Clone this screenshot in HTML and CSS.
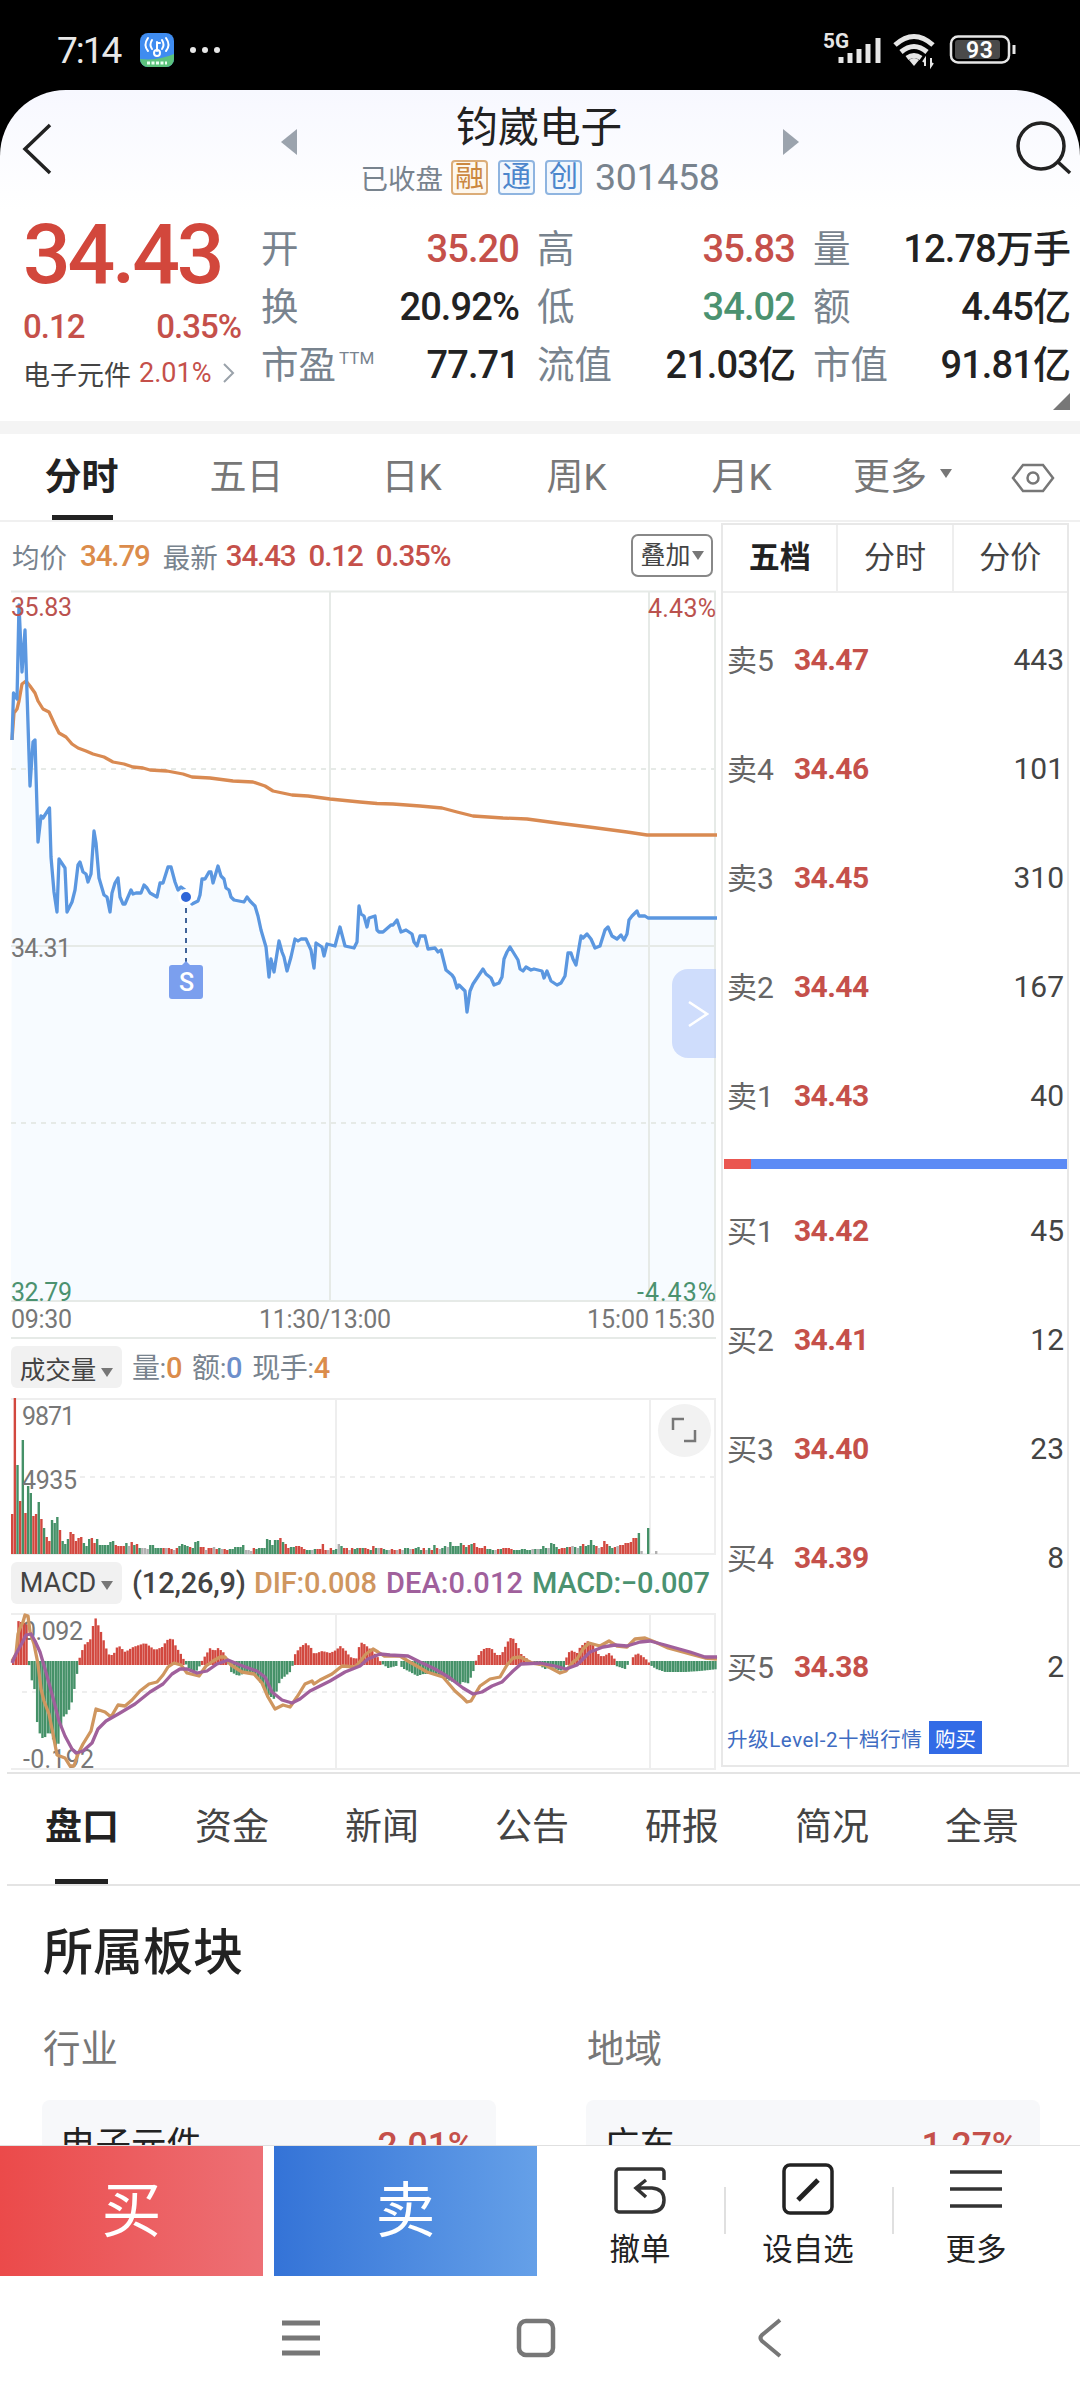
FILE: index.html
```html
<!DOCTYPE html>
<html lang="zh-CN">
<head>
  <meta charset="UTF-8" />
  <meta name="viewport" content="width=device-width, initial-scale=1.0" />
  <title>钧崴电子 301458</title>
  <link rel="stylesheet" href="styles.css">
</head>
<body>
  <div class="status-bar">
    <span class="time">7:14</span>
    <svg class="app-icon" width="34" height="34" viewBox="0 0 34 34">
      <defs><clipPath id="appClip"><rect width="34" height="34" rx="8" /></clipPath></defs>
      <g clip-path="url(#appClip)">
        <rect width="34" height="34" fill="#3f8cf0" />
        <path d="M0 26Q18 28 34 21V34H0z" fill="#5cc27c" />
        <g fill="none" stroke="#fff" stroke-width="2" stroke-linecap="round">
          <path d="M17 9v9M17 10h3M12 7q-3 5 0 9M22 7q3 5 0 9M8 5q-5 7 0 13M26 5q5 7 0 13" />
          <circle cx="17" cy="20" r="3" />
        </g>
        <path d="M7 30h20" stroke="#e8fff0" stroke-width="3" stroke-dasharray="3 1.5" />
      </g>
    </svg>
    <svg width="34" height="34" viewBox="0 0 34 34" fill="#e8e8e8">
      <circle cx="5" cy="17" r="3" /><circle cx="17" cy="17" r="3" /><circle cx="29" cy="17" r="3" />
    </svg>
    <svg class="signals" width="200" height="40" viewBox="820 30 200 40">
      <text x="823" y="48" font-size="21" font-weight="700" textLength="26" lengthAdjust="spacingAndGlyphs" fill="#e6e6e6">5G</text>
      <path d="M841 57v6M850 53v10M859 49v14M868 44v19M878 38v25" stroke="#e6e6e6" stroke-width="5" />
      <g fill="none" stroke="#e6e6e6" stroke-width="5">
        <path d="M895 45Q914 28 933 45" />
        <path d="M901 52Q914 41 927 52" />
        <path d="M907 58Q914 53 921 58" />
      </g>
      <path d="M909 60q5-4 10 0l-5 6z" fill="#e6e6e6" />
      <path d="M925 66v-7l-2 3M931 58v8l2-3" stroke="#e6e6e6" stroke-width="2" fill="none" />
      <rect x="951" y="36.500" width="58" height="26" rx="7" fill="none" stroke="#e6e6e6" stroke-width="2.500" />
      <rect x="955" y="40" width="45" height="19" rx="3" fill="#4a4a4a" />
      <path d="M1014 45v9" stroke="#e6e6e6" stroke-width="3" />
      <text x="966" y="58" font-size="23" font-weight="600" textLength="27" fill="#fff">93</text>
    </svg>
  </div>

  <div class="page">
    <header class="top">
      <svg width="60" height="100" viewBox="0 0 60 100"><path d="M50 35L25 59L50 83" fill="none" stroke="#222" stroke-width="3.500" /></svg>
      <div class="tri-left"></div>
      <div class="stock">
        <h1>钧崴电子</h1>
        <div class="sub">
          <span class="state">已收盘</span>
          <i class="tag orange">融</i><i class="tag">通</i><i class="tag">创</i>
          <span class="code">301458</span>
        </div>
      </div>
      <div class="tri-right"></div>
      <svg class="search" width="70" height="100" viewBox="1010 90 70 100"><circle cx="1041" cy="146" r="23" fill="none" stroke="#222" stroke-width="3.500" /><path d="M1058 162L1070 173" stroke="#222" stroke-width="3.500" /></svg>
    </header>

    <section class="quote">
      <div class="price-box">
        <div class="price">34.43</div>
        <div class="change"><span>0.12</span><span>0.35%</span></div>
        <div class="sector">电子元件 <b>2.01%</b>
          <svg width="14" height="22" viewBox="0 0 14 22"><path d="M2 2L11 11L2 20" fill="none" stroke="#9aa2aa" stroke-width="2" /></svg>
        </div>
      </div>
      <div class="stats">
        <div class="stat"><label>开</label><span class="red">35.20</span></div>
        <div class="stat"><label>高</label><span class="red">35.83</span></div>
        <div class="stat"><label>量</label><span>12.78万手</span></div>
        <div class="stat"><label>换</label><span>20.92%</span></div>
        <div class="stat"><label>低</label><span class="green">34.02</span></div>
        <div class="stat"><label>额</label><span>4.45亿</span></div>
        <div class="stat"><label>市盈<sup>TTM</sup></label><span>77.71</span></div>
        <div class="stat"><label>流值</label><span>21.03亿</span></div>
        <div class="stat"><label>市值</label><span>91.81亿</span></div>
      </div>
      <div class="corner"></div>
    </section>

    <nav class="periods">
      <span class="active">分时</span><span>五日</span><span>日K</span><span>周K</span><span>月K</span>
      <span class="more">更多<i class="caret"></i></span>
      <svg width="44" height="30" viewBox="0 0 44 30" fill="none" stroke="#777" stroke-width="2.500"><path d="M12 2H32L42 15L32 28H12L2 15z" /><circle cx="22" cy="15" r="5.500" /></svg>
    </nav>

    <main class="market">
      <div class="charts">
        <div class="chart-info">
          <label>均价</label><b class="orange-text">34.79</b>
          <label>最新</label><b>34.43</b><b>0.12</b><b>0.35%</b>
          <button class="overlay-btn">叠加<i class="caret"></i></button>
        </div>
        <div class="price-chart">
          <svg width="720" height="749" viewBox="0 0 720 749">
            <path id="area" fill="#f7fbff" />
            <g stroke="#e6eae7" stroke-width="2" fill="none">
              <path d="M11 1.500H716M11 356H716M11 711H716M330 1V711M649 1V711M715 1V711" />
              <path d="M11 179H716M11 533H716" stroke-dasharray="5 5" />
              <path d="M11 748H716" />
            </g>
            <path id="avg" class="line" stroke="#d98a52" />
            <path id="price" class="line" stroke="#5b97e0" />
            <path d="M186 318V378" stroke="#3f6298" stroke-width="2" stroke-dasharray="5 5" />
            <circle cx="186" cy="307" r="6.500" fill="#2f66d8" stroke="#fff" stroke-width="3" />
            <path d="M182 375L186 371L190 375H200a3 3 0 0 1 3 3V406a3 3 0 0 1-3 3H172a3 3 0 0 1-3-3V378a3 3 0 0 1 3-3z" fill="#7b9fee" />
            <text x="179" y="401" font-size="25" textLength="15" fill="#fff" font-weight="500">S</text>
            <g font-size="25">
              <text x="11" y="26" textLength="61" fill="#bb524e">35.83</text>
              <text x="648" y="27" textLength="68" fill="#bb524e">4.43%</text>
              <text x="11" y="367" textLength="60" fill="#777">34.31</text>
              <text x="11" y="711" textLength="61" fill="#4b9270">32.79</text>
              <text x="637" y="711" textLength="79" fill="#4b9270">-4.43%</text>
              <g fill="#777">
                <text x="11" y="738" textLength="61">09:30</text>
                <text x="259" y="738" textLength="132">11:30/13:00</text>
                <text x="587" y="738" textLength="62">15:00</text>
                <text x="654" y="738" textLength="61">15:30</text>
              </g>
            </g>
          </svg>
          <div class="expand-side"><svg width="22" height="28" viewBox="0 0 22 28"><path d="M2 2L20 14L2 26" fill="none" stroke="#fff" stroke-width="2.500" /></svg></div>
        </div>

        <div class="indicator vol-head">
          <button>成交量<i class="caret"></i></button>
          <span>量:<b class="orange-text">0</b></span><span>额:<b class="blue-text">0</b></span><span>现手:<b class="orange-text">4</b></span>
        </div>
        <div class="volume-chart">
          <svg width="720" height="158" viewBox="0 0 720 158">
            <path d="M11 1H716M11 156H716M336 1V156M650 1V156M715 1V156" stroke="#eee" stroke-width="2" />
            <path d="M80 79H716" stroke="#eee" stroke-width="2" stroke-dasharray="5 5" />
            <g id="volBars"></g>
            <g font-size="25" fill="#777"><text x="22" y="27" textLength="53">9871</text><text x="22" y="91" textLength="55">4935</text></g>
          </svg>
          <div class="zoom-btn"><svg width="26" height="26" viewBox="0 0 26 26"><path d="M2 13V2H13M24 13V24H13" fill="none" stroke="#777" stroke-width="2.500" /></svg></div>
        </div>

        <div class="indicator macd-head">
          <button>MACD<i class="caret"></i></button>
          <svg width="590" height="42" viewBox="130 0 590 42" font-size="29" font-weight="500">
            <text x="132" y="31" textLength="114" fill="#444">(12,26,9)</text>
            <text x="254" y="31" textLength="123" fill="#cf965f">DIF:0.008</text>
            <text x="386" y="31" textLength="137" fill="#a0609c">DEA:0.012</text>
            <text x="532" y="31" textLength="178" fill="#4b9270">MACD:−0.007</text>
          </svg>
        </div>
        <svg class="macd-chart" width="720" height="158" viewBox="0 0 720 158">
          <path d="M11 0H716M11 155H716M336 0V155M650 0V155M715 0V155" stroke="#eee" stroke-width="2" />
          <path d="M22 78H716" stroke="#eee" stroke-width="2" stroke-dasharray="5 5" />
          <g font-size="25" fill="#777"><text x="22" y="26" textLength="61">0.092</text><text x="23" y="154" textLength="71">-0.192</text></g>
          <g id="macdBars"></g>
          <path id="dif" class="line" stroke="#cf965f" />
          <path id="dea" class="line" stroke="#a0609c" />
        </svg>
      </div>

      <aside class="book">
        <div class="book-tabs"><span class="active">五档</span><span>分时</span><span>分价</span></div>
        <ul class="levels sell">
          <li><span>卖5</span><b>34.47</b><em>443</em></li>
          <li><span>卖4</span><b>34.46</b><em>101</em></li>
          <li><span>卖3</span><b>34.45</b><em>310</em></li>
          <li><span>卖2</span><b>34.44</b><em>167</em></li>
          <li><span>卖1</span><b>34.43</b><em>40</em></li>
        </ul>
        <div class="ratio"><div style="width: 7.8%"></div></div>
        <ul class="levels buy">
          <li><span>买1</span><b>34.42</b><em>45</em></li>
          <li><span>买2</span><b>34.41</b><em>12</em></li>
          <li><span>买3</span><b>34.40</b><em>23</em></li>
          <li><span>买4</span><b>34.39</b><em>8</em></li>
          <li><span>买5</span><b>34.38</b><em>2</em></li>
        </ul>
        <div class="upgrade"><span>升级Level-2十档行情</span><button>购买</button></div>
      </aside>
    </main>

    <nav class="sections">
      <span class="active">盘口</span><span>资金</span><span>新闻</span><span>公告</span><span>研报</span><span>简况</span><span>全景</span>
    </nav>

    <section class="blocks">
      <h2>所属板块</h2>
      <div class="block-grid">
        <div><h3>行业</h3><div class="block-card"><span>电子元件</span><b>2.01%</b></div></div>
        <div><h3>地域</h3><div class="block-card"><span>广东</span><b>1.27%</b></div></div>
      </div>
    </section>

    <footer class="trade">
      <button class="buy-btn">买</button>
      <button class="sell-btn">卖</button>
      <div class="actions">
        <a>
          <svg width="52" height="52" viewBox="0 0 52 52" fill="none" stroke="#333" stroke-width="3.500"><path d="M50 17V9a3 3 0 0 0-3-3H5a3 3 0 0 0-3 3V46a3 3 0 0 0 3 3H38Q50 48 50 37Q50 26 38 25H23M32 17L22 25L32 34" /></svg>
          撤单
        </a>
        <a>
          <svg width="52" height="52" viewBox="0 0 52 52" fill="none" stroke="#222" stroke-width="3.500"><rect x="2" y="2" width="48" height="48" rx="6" /><path d="M16 37L36 17" stroke-width="5" /></svg>
          设自选
        </a>
        <a>
          <svg width="52" height="52" viewBox="0 0 52 52" stroke="#333" stroke-width="3.500"><path d="M0 9H52M0 26H52M0 43H52" /></svg>
          更多
        </a>
      </div>
    </footer>

    <div class="sys-nav">
      <svg width="38" height="40" viewBox="0 0 38 40" stroke="#777" stroke-width="5"><path d="M0 5H38M0 20H38M0 35H38" /></svg>
      <svg width="40" height="40" viewBox="0 0 40 40"><rect x="3" y="3" width="34" height="34" rx="7" fill="none" stroke="#777" stroke-width="4.500" /></svg>
      <svg width="26" height="40" viewBox="0 0 26 40"><path d="M23 2L5 17Q2 20 5 23L23 38" fill="none" stroke="#777" stroke-width="4" /></svg>
    </div>
  </div>
  <script src="chart.js"></script>
</body>
</html>
```

FILE: styles.css
```css
* {
  box-sizing: border-box;
}
body {
  margin: 0;
  width: 1080px;
  height: 2400px;
  overflow: hidden;
  background: #000;
  color: #222;
  font-family: Roboto, "Noto Sans CJK SC", sans-serif;
}
h1, h2, h3, ul {
  margin: 0;
  padding: 0;
  font-weight: 400;
}
i, em {
  font-style: normal;
}
b {
  font-weight: 500;
}
svg {
  display: block;
  flex: none;
}
button {
  border: none;
  padding: 0;
  font-family: inherit;
}
.red, .chart-info b {
  color: #c5504a;
}
.green {
  color: #4b9270;
}
.chart-info .orange-text, .orange-text {
  color: #db8c4b;
}
.blue-text {
  color: #6d8fcb;
}
.line {
  fill: none;
  stroke-width: 3.3;
  stroke-linejoin: round;
}
.caret {
  display: inline-block;
  border: 6px solid transparent;
  border-top: 9px solid #777;
  border-bottom: 0;
}

/* status bar */
.status-bar {
  height: 90px;
  padding: 10px 60px 0 57px;
  display: flex;
  align-items: center;
  color: #e8e8e8;
}
.time {
  width: 83px;
  font-size: 37px;
  letter-spacing: -2px;
}
.app-icon {
  margin-right: 14px;
}
.signals {
  margin-left: auto;
}

.page {
  height: 2310px;
  border-radius: 66px 66px 0 0;
  background: linear-gradient(#f7f8ff, #fff 120px);
  overflow: hidden;
}
.top {
  height: 118px;
  display: flex;
}
.tri-left, .tri-right {
  margin-top: 39px;
  height: 0;
  border: 13px solid transparent;
}
.tri-left {
  margin-left: 221px;
  border-left: 0;
  border-right: 16px solid #9ba3ad;
}
.tri-right {
  border-right: 0;
  border-left: 16px solid #9ba3ad;
}
.stock {
  width: 486px;
  padding-top: 12px;
  text-align: center;
}
.stock h1 {
  height: 54px;
  line-height: 52px;
  font-size: 41.5px;
  margin-left: -2px;
}
.sub {
  display: flex;
  align-items: center;
  justify-content: center;
  height: 42px;
  color: #78838e;
}
.state {
  font-size: 27.5px;
  margin-right: 8px;
}
.tag {
  width: 37px;
  height: 35px;
  margin-right: 10px;
  border: 2px solid #8eb4e0;
  border-radius: 4px;
  background: #f2f7fd;
  color: #4c86cc;
  font-size: 29px;
  line-height: 30px;
}
.tag.orange {
  border-color: #dbac78;
  background: #fdf7ee;
  color: #cb8740;
}
.code {
  margin-left: 3px;
  font-size: 37.5px;
  letter-spacing: -0.3px;
}
.search {
  margin-left: auto;
}

/* quote */
.quote {
  position: relative;
  height: 226px;
  border-bottom: 13px solid #f4f4f4;
  display: flex;
}
.price-box {
  width: 261px;
  padding-left: 23px;
  color: #c5504a;
}
.price {
  height: 91px;
  line-height: 94px;
  font-size: 84px;
  font-weight: 500;
  letter-spacing: -3.2px;
  color: #d2473c;
}
.change {
  width: 218px;
  height: 54px;
  line-height: 55px;
  font-size: 33px;
  font-weight: 500;
  display: flex;
  justify-content: space-between;
  letter-spacing: -1px;
}
.sector {
  display: flex;
  align-items: center;
  height: 40px;
  font-size: 27px;
  color: #444;
}
.sector b {
  margin: 0 11px 0 8px;
  font-weight: 400;
  color: #c5504a;
}
.stats {
  width: 809px;
  height: 177px;
  padding-top: 12px;
  display: grid;
  grid-template-columns: 258px 258px 257px;
  grid-auto-rows: 58px;
  column-gap: 18px;
}
.stat {
  display: flex;
  justify-content: space-between;
  line-height: 58px;
  font-size: 38px;
  white-space: nowrap;
}
.stat label {
  color: #78838e;
  font-size: 37.5px;
}
.stat sup {
  position: relative;
  top: -14px;
  margin-left: 3px;
  font-size: 17px;
  line-height: 0;
  vertical-align: baseline;
}
.stat span {
  letter-spacing: -0.9px;
  font-weight: 500;
}
.corner {
  position: absolute;
  right: 10px;
  bottom: 11px;
  border-left: 17px solid transparent;
  border-bottom: 17px solid #777;
}

/* period tabs */
.periods {
  height: 88px;
  border-bottom: 2px solid #f0f0f0;
  display: flex;
  align-items: center;
  font-size: 37px;
  color: #777;
}
.periods span {
  position: relative;
  width: 165px;
  padding-right: 2px;
  text-align: center;
  line-height: 88px;
  height: 86px;
}
.periods .more {
  width: 186px;
  padding-left: 28px;
  text-align: left;
}
.periods .caret {
  margin: 0 0 12px 13px;
}
.periods svg {
  margin-top: 2px;
}
.periods .active, .sections .active {
  color: #222;
  font-weight: 700;
}
.periods .active::after, .sections .active::after {
  content: "";
  position: absolute;
  left: 52px;
  bottom: 0;
  width: 61px;
  height: 5px;
  background: #222;
}

/* charts */
.market {
  height: 1250px;
  display: flex;
}
.charts {
  width: 721px;
}
.chart-info {
  height: 68px;
  padding: 0 8px 1px 12px;
  display: flex;
  align-items: center;
  font-size: 29.5px;
}
.chart-info label {
  color: #78838e;
  font-size: 27.5px;
}
.chart-info b {
  margin: 0 12px 0 9px;
  letter-spacing: -1.1px;
}
.chart-info .orange-text {
  margin: 0 13px;
}
.chart-info label + b:not(.orange-text) {
  margin-left: 8px;
}
.chart-info b + b {
  margin-left: 1px;
}
.overlay-btn {
  width: 82px;
  height: 43px;
  margin-left: auto;
  border: 2px solid #888;
  border-radius: 7px;
  background: #fff;
  color: #444;
  font-size: 25px;
  line-height: 38px;
  white-space: nowrap;
}
.overlay-btn .caret {
  margin: 0 0 4px 1px;
}
.price-chart, .volume-chart {
  position: relative;
}
.expand-side {
  position: absolute;
  right: 5px;
  top: 379px;
  width: 44px;
  height: 89px;
  padding: 31px 0 0 15px;
  border-radius: 16px 0 0 16px;
  background: rgba(184, 203, 250, 0.64);
}
.indicator {
  display: flex;
  align-items: center;
  padding-left: 11px;
  font-size: 28px;
  color: #78838e;
}
.indicator button {
  width: 111px;
  height: 42px;
  margin-right: 10px;
  border-radius: 6px;
  background: #f1f1f1;
  color: #444;
  font-size: 25.5px;
  white-space: nowrap;
}
.indicator .caret {
  margin: 0 0 2px 5px;
}
.indicator span {
  margin-right: 10px;
  letter-spacing: -0.4px;
}
.indicator b {
  font-size: 29px;
}
.vol-head {
  height: 59px;
  padding-bottom: 3px;
}
.vol-head span {
  padding-bottom: 3px;
}
.macd-head {
  height: 58px;
  padding-bottom: 4px;
}
.macd-head button {
  font-size: 27px;
  margin-right: 8px;
}
.zoom-btn {
  position: absolute;
  left: 658px;
  top: 6px;
  width: 53px;
  height: 53px;
  padding: 13px;
  border-radius: 50%;
  background: #f2f2f2;
}
.macd-chart {
  overflow: visible;
}

/* order book */
.book {
  width: 348px;
  height: 1244px;
  margin-top: 1px;
  border: 2px solid #e8e8e8;
}
.book-tabs {
  display: flex;
  height: 68px;
  border-bottom: 2px solid #eee;
}
.book-tabs span {
  flex: 1;
  text-align: center;
  line-height: 66px;
  font-size: 31px;
  color: #444;
}
.book-tabs span + span {
  border-left: 2px solid #eee;
}
.book-tabs .active {
  color: #222;
  font-weight: 700;
}
.levels {
  list-style: none;
}
.sell {
  padding: 12px 0 9px;
}
.buy {
  padding: 7px 0 0;
}
.levels li {
  height: 109px;
  padding: 0 3px 0 4px;
  display: flex;
  align-items: center;
  color: #666;
  font-size: 30px;
}
.levels span {
  width: 67px;
  padding-bottom: 3px;
}
.levels b {
  color: #c5504a;
  font-weight: 700;
  letter-spacing: -0.6px;
}
.levels em {
  margin-left: auto;
  color: #444;
}
.ratio {
  height: 10px;
  margin: 0 0 0 1px;
  background: #5c8bf5;
}
.ratio div {
  height: 10px;
  background: #ea5650;
}
.upgrade {
  display: flex;
  align-items: center;
  height: 33px;
  padding-left: 4px;
  font-size: 20.5px;
  color: #3e6cc2;
}
.upgrade span {
  width: 202px;
  letter-spacing: 0.6px;
  white-space: nowrap;
}
.upgrade button {
  width: 53px;
  height: 33px;
  background: #326be6;
  color: #fff;
  font-size: 20.5px;
}

/* section tabs */
.sections {
  display: flex;
  height: 114px;
  margin-left: 7px;
  border-top: 2px solid #e4e4e4;
  border-bottom: 2px solid #e4e4e4;
  font-size: 37px;
  color: #444;
}
.sections span {
  position: relative;
  width: 150px;
  text-align: center;
  line-height: 107px;
}
.sections .active::after {
  left: 48px;
  width: 53px;
}

.blocks {
  height: 259px;
  padding: 39px 40px 0 42px;
  overflow: hidden;
}
.blocks h2 {
  height: 58px;
  padding-left: 1px;
  line-height: 56px;
  font-size: 50px;
  font-weight: 500;
}
.block-grid {
  display: grid;
  grid-template-columns: 454px 454px;
  column-gap: 90px;
}
.blocks h3 {
  height: 117px;
  padding-left: 1px;
  line-height: 132px;
  font-size: 37.5px;
  color: #777;
}
.block-card {
  height: 110px;
  padding: 8px 22px 0 18px;
  display: flex;
  justify-content: space-between;
  line-height: 74px;
  font-size: 35.5px;
  border-radius: 8px;
  background: #f7f8fa;
}
.block-card b {
  color: #c5504a;
}

/* bottom bars */
.trade {
  height: 131px;
  border-top: 1px solid #e0e0e0;
  display: flex;
  background: #fff;
}
.trade button {
  width: 263px;
  height: 130px;
  margin-right: 11px;
  padding-bottom: 12px;
  color: #fff;
  font-size: 60px;
}
.buy-btn {
  background: linear-gradient(90deg, #eb4a4a, #ed7075);
}
.sell-btn {
  background: linear-gradient(90deg, #3473d7, #65a0e8);
}
.actions {
  display: flex;
  margin-left: 8px;
}
.actions a {
  position: relative;
  width: 168px;
  padding-top: 17px;
  display: flex;
  flex-direction: column;
  align-items: center;
  font-size: 30.5px;
  line-height: 34px;
  gap: 18px;
}
.actions a + a::before {
  content: "";
  position: absolute;
  left: 0;
  top: 41px;
  height: 47px;
  border-left: 2px solid #e0e0e0;
}
.sys-nav {
  height: 124px;
  background: #fff;
  display: flex;
  align-items: center;
  padding-left: 282px;
}
.sys-nav svg:nth-child(2) {
  margin: 0 201px 0 196px;
}
```

FILE: chart.js
```js
const avg = "12,150 14,123 17,119 19,111 22,94 26,91 30,96 35,103 38,111 43,119 49,122 55,135 59,143 66,147 72,154 78,158 86,161 93,164 104,167 113,172 124,174 133,177 143,178 150,180 167,181 183,184 192,187 210,188 233,191 253,192 265,196 273,201 292,205 308,206 330,209 360,212 377,213.5 393,214 420,216 442,218 457,222 473,226 503,228 527,229 557,233 593,237.5 627,242 647,245 717,245";

const price = "12,150 13.5,103 17,109 19,15 22,82 25,40 30,196 33,152 35,150 38,252 41,226 43,228 49.5,218 51,267 54,302 57,322 59,269 65,278 67,322 72,312 75,300 78,275 80,272 83,282 86,284 88,292 91,284 94,241 96,253 99,288 104,305 107,307 110,322 112,303 115,293 118,288 120,307 123,314 125,314 131,300 133,304 136,303 141,303 144,295 147,298 150,303 157,307 160,293 163,293 168,277 171,277 175,292 178,300 181,297 185,300 186,307 192,314 198,311 200,305 202,289 205,289 209,282 211,282 213,293 218,276 221,286 224,289 226,298 229,300 231,307 234,310 244,312 247,307 250,311 255,316 258,326 261,340 266,357 269,387 271,369 274,382 279,351 282,362 284,367 287,381 291,367 295,349 298,351 301,349 306,349 311,360 314,378 316,353 322,357 324,366 327,354 335,356 340,337 345,356 354,358 357,352 359,316 361,324 364,326 367,337 369,328 375,326 377,340 379,342 383,342 391,335 393,335 397,330 401,342 406,340 412,344 414,352 417,356 420,346 425,346 428,359 435,358 438,362 441,360 446,380 452,385 454,388 457,398 459,395 465,401 467,422 470,401 473,394 483,379 486,384 491,388 494,395 499,393 502,387 504,369 507,362 510,357 518,370 520,379 523,381 526,377 531,380 534,379 542,381 544,388 547,381 551,391 557,395 561,393 565,386 568,363 571,363 573,369 576,375 581,346 583,348 587,344 591,349 595,358 600,356 605,340 608,337 612,346 617,349 621,345 624,350 627,344 629,330 632,326 637,321 639,326 645,326 648,328 717,328";

const dif = "12,47 16,40 18,20 20,14 23,8 25,1 28,2 30,18 34,30 38,50 41,75 44,87 49,100 53,120 57,141 65,144 70,152 74,152 78,140 83,130 91,117 96,95 105,98 111,103 118,91 125,92 132,86 140,77 149,70 157,68 163,61 168,53 174,49 181,51 187,59 199,62 206,52 213,47 220,43 225,43 231,51 242,58 254,60 262,69 268,83 275,95 283,91 290,93 297,83 305,70 312,67 314,70 320,66 332,60 342,52 355,53 358,50 366,40 373,35 378,38 384,42 400,42 408,47 415,51 427,58 443,63 455,77 463,84 467,88 471,87 480,72 490,65 500,63 507,51 513,44 520,43 532,49 545,51 560,59 566,57 573,48 577,45 583,35 589,29 600,32 609,27 617,32 627,33 635,25 645,24 655,28 668,34 690,40 705,44 717,45";

const dea = "12,49 16,40 22,29 26,21 31,20 35,27 40,38 45,55 52,80 59,107 65,122 72,135 76,139 83,137 92,129 98,115 106,107 120,99 135,90 150,78 163,70 172,60 180,55 187,55 197,59 207,57 217,50 228,46 240,51 257,57 265,63 272,78 282,86 292,89 300,85 310,77 330,67 345,58 360,52 368,45 380,40 390,41 408,42 420,48 435,55 450,64 463,74 473,80 482,78 492,72 502,68 513,57 521,50 540,49 555,52 566,55 577,51 590,38 603,33 615,31 627,32 640,28 650,27 665,31 690,38 705,43 717,43";

// r = up, g = down, n = flat; one entry per minute
const volume = "r40 r156 g89 r53 g114 r41 g68 g61 r38 r40 g52 r35 g26 r17 r13 g34 g31 g37 r24 g13 g10 g15 r22 r20 r13 r16 r17 g11 g8 g15 r16 r11 g15 g9 g9 g9 g9 g12 g13 r9 r8 r8 r8 g11 n8 r12 g9 r10 g6 n6 n6 n5 g9 g9 g6 g6 g6 r6 n6 r6 r5 n4 r6 g8 g10 g9 g8 r7 g6 g12 g13 r7 r7 n4 r6 r6 n7 r5 g6 n5 r5 r4 g5 g5 g7 g7 g7 g9 n4 n4 n3 r6 g5 g6 g6 g6 g15 g14 g9 g14 g14 r16 g12 r10 r6 g7 g7 r8 r8 r7 r5 g4 g4 n4 g5 r5 r5 r10 r4 n4 r6 g4 g5 n10 g8 r6 r6 n4 r6 g5 g6 r6 g6 r6 r5 g4 r8 g6 n6 r6 g5 g4 n4 r5 r4 n4 r5 n4 g6 g6 n5 r5 g6 g7 g4 r6 n4 g6 r4 g9 r6 n5 g6 g8 n7 g12 g8 g8 g8 g11 r9 g7 r9 g10 r11 r7 r6 r6 r8 g5 g5 g4 n4 r5 g5 r6 r6 r6 r5 g4 g4 g4 g5 g5 g4 g4 n5 g5 n5 g5 g8 g6 n6 g11 g10 g7 r5 r6 r6 g7 r7 n8 g7 n6 g8 r10 g8 g9 g14 g9 r8 n6 r7 r13 r10 g8 g6 r7 n8 r9 r9 r11 r11 r12 r16 r16 g21 n3";

const macd = "12,2 14,7 16,8 18,42 24,40 26,42 28,20 29,-3 30,-6 32,-20 35,-28 37,-60 40,-72 43,-76 46,-73 49,-68 52,-74 55,-82 57,-85 59,-78 61,-62 64,-52 67,-51 71,-42 74,-27 77,-10 78,0 80,7 84,18 90,23 93,38 96,46 98,38 102,28 105,17 109,8 113,8 118,18 125,11 133,16 145,20 155,13 162,16 167,23 172,25 176,16 182,7 185,0 188,-5 193,-9 198,-7 200,-1 203,4 210,15 214,12 218,15 224,10 228,0 231,-9 238,-13 245,-10 255,-12 262,-22 268,-32 274,-36 280,-17 284,-14 291,-8 293,0 295,9 300,16 306,20 311,15 314,9 322,12 330,10 336,13 340,17 345,13 350,6 356,4 360,21 364,19 370,14 376,8 380,2 382,-1 388,-5 396,-3 399,0 402,-5 410,-9 417,-13 423,-11 431,-11 440,-12 450,-18 460,-21 464,-18 467,-22 470,-16 474,-6 476,3 480,11 485,15 491,15 496,8 501,8 505,16 509,24 512,26 517,18 521,9 526,5 532,0 540,-3 545,-6 552,-4 560,-8 564,-6 566,5 570,13 577,10 580,16 587,22 593,19 597,10 602,6 609,10 614,5 616,-3 625,-6 628,-1 630,0 632,5 637,10 642,7 648,2 650,-2 656,-6 665,-9 685,-9 700,-8 718,-6";

const colors = { r: "#d2483f", g: "#459168", n: "#b0b0b0" };

function setLine(id, points) {
  document.getElementById(id).setAttribute("d", "M" + points);
}

function bar(x, y, h, color) {
  return `<rect x="${x}" y="${y}" width="2.4" height="${h}" fill="${color}" />`;
}

setLine("avg", avg);
setLine("price", price);
setLine("dif", dif);
setLine("dea", dea);
setLine("area", price.replace("717,328", "715,328") + " 715,711 11,711z");

const vols = volume.split(" ");
const step = 632 / vols.length;
let html = "";
vols.forEach((v, i) => {
  const h = Number(v.slice(1));
  html += bar(11 + i * step, 156 - h, h, colors[v[0]]);
});
html += bar(647, 130, 26, colors.g) + bar(655, 153, 3, colors.n);
document.getElementById("volBars").innerHTML = html;

const keys = macd.split(" ").map(p => p.split(",").map(Number));
html = "";
for (let x = 13; x < 717; x += 2.66) {
  const k = keys.findIndex(p => p[0] >= x);
  const a = keys[k - 1], b = keys[k];
  const h = a[1] + (b[1] - a[1]) * (x - a[0]) / (b[0] - a[0]);
  if (h > 0.5) html += bar(x - 1, 49 - h, h + 2, colors.r);
  if (h < -0.5) html += bar(x - 1, 47, 2 - h, colors.g);
}
document.getElementById("macdBars").innerHTML = html;
```
